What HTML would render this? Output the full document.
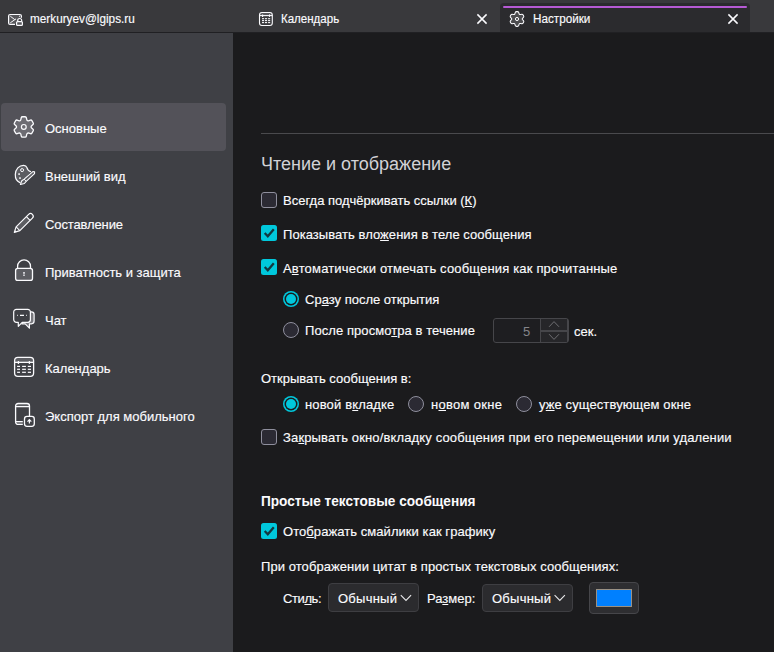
<!DOCTYPE html>
<html><head><meta charset="utf-8">
<style>
html,body{margin:0;padding:0;width:774px;height:652px;overflow:hidden;background:#1b1b1d;}
body{position:relative;font-family:"Liberation Sans",sans-serif;color:#fbfbfe;}
.abs{position:absolute;}
.t{position:absolute;white-space:nowrap;font-size:13px;line-height:13px;-webkit-text-stroke-width:0.15px;}
#strip{left:0;top:0;width:774px;height:32px;background:#39393c;}
#stripline{left:0;top:32px;width:774px;height:1px;background:#202023;}
#seltab{left:500px;top:3px;width:250px;height:29px;background:#2b2b2e;border-radius:4px 4px 0 0;}
#tabline{left:503px;top:6px;width:244px;height:2px;background:#b65ad4;border-radius:1px;}
#side{left:0;top:33px;width:233px;height:619px;background:#3f4045;}
#selitem{left:1px;top:103px;width:225px;height:48px;background:#535259;border-radius:4px;}
.sep{left:261px;top:133px;width:513px;height:1px;background:#4a4a4d;}
.cb{position:absolute;width:14px;height:14px;border:1px solid #8f8f9d;background:#2b2a33;border-radius:3px;}
.cbc{position:absolute;width:16px;height:16px;background:#00c4da;border-radius:3px;}
.rd{position:absolute;width:14px;height:14px;border:1px solid #8f8f9d;background:#2b2a33;border-radius:50%;}
.rdc{position:absolute;width:16px;height:16px;background:#00c4da;border-radius:50%;}
.rdc::after{content:"";position:absolute;left:2px;top:2px;width:8px;height:8px;border:2px solid #1b1b1d;border-radius:50%;background:#00c4da;}
.u{text-decoration:underline;text-underline-offset:1px;}
.dd{position:absolute;background:#2b2b2e;border:1px solid #3e3e42;box-sizing:border-box;border-radius:4px;}
</style></head><body>
<!-- tab strip -->
<div id="strip" class="abs"></div>
<div id="stripline" class="abs"></div>
<div id="seltab" class="abs"></div>
<div id="tabline" class="abs"></div>

<div class="t" style="left:30px;top:13px;font-size:12px;line-height:12px;transform:scaleX(0.98);transform-origin:0 0">merkuryev@lgips.ru</div>
<div class="t" style="left:281px;top:13px;font-size:12px;line-height:12px;transform:scaleX(0.96);transform-origin:0 0">Календарь</div>
<div class="t" style="left:533px;top:13px;font-size:12px;line-height:12px;transform:scaleX(0.975);transform-origin:0 0">Настройки</div>

<!-- sidebar -->
<div id="side" class="abs"></div>
<div id="selitem" class="abs"></div>
<div class="t" style="left:45px;top:122px">Основные</div>
<div class="t" style="left:45px;top:170px">Внешний вид</div>
<div class="t" style="left:45px;top:218px;letter-spacing:-0.12px">Составление</div>
<div class="t" style="left:45px;top:266px">Приватность и защита</div>
<div class="t" style="left:45px;top:314px">Чат</div>
<div class="t" style="left:45px;top:362px">Календарь</div>
<div class="t" style="left:45px;top:410px">Экспорт для мобильного</div>

<!-- content -->
<div class="abs sep"></div>
<div class="t" style="left:261px;top:155px;font-size:18px;line-height:18px;color:#d2d2d6;-webkit-text-stroke-width:0">Чтение и отображение</div>

<div class="cb" style="left:261px;top:192px"></div>
<div class="t" style="left:283px;top:194px">Всегда подчёркивать ссылки (<span class="u">К</span>)</div>

<svg class="abs" style="left:261px;top:225px" width="16" height="16" viewBox="0 0 16 16"><rect width="16" height="16" rx="2.5" fill="#00c8dc"/><path d="M3.7,8.0 L6.8,11.2 L12.8,4.2" fill="none" stroke="#123740" stroke-width="2.3"/></svg>
<div class="t" style="left:283px;top:228px;letter-spacing:0.05px">Показывать вло<span class="u">ж</span>ения в теле сообщения</div>

<svg class="abs" style="left:261px;top:259px" width="16" height="16" viewBox="0 0 16 16"><rect width="16" height="16" rx="2.5" fill="#00c8dc"/><path d="M3.7,8.0 L6.8,11.2 L12.8,4.2" fill="none" stroke="#123740" stroke-width="2.3"/></svg>
<div class="t" style="left:283px;top:262px;letter-spacing:0.17px">А<span class="u">в</span>томатически отмечать сообщения как прочитанные</div>

<svg class="abs" style="left:283px;top:291px" width="16" height="16" viewBox="0 0 16 16"><circle cx="8" cy="8" r="8" fill="#00c8dc"/><circle cx="8" cy="8" r="6.5" fill="#1b1b1d"/><circle cx="8" cy="8" r="5" fill="#00c8dc"/></svg>
<div class="t" style="left:305px;top:293px">Ср<span class="u">а</span>зу после открытия</div>

<div class="rd" style="left:283px;top:322px"></div>
<div class="t" style="left:305px;top:324px;letter-spacing:0.07px">После просмо<span class="u">т</span>ра в течение</div>

<div class="abs" style="left:493px;top:318px;width:74px;height:23px;border:1px solid #46464a;border-radius:3px;background:#1e1e21"></div><div class="abs" style="left:540px;top:319px;width:26px;height:23px;background:#262629;border-left:1px solid #46464a;border-right:1px solid #46464a"></div><div class="abs" style="left:541px;top:330px;width:26px;height:2px;background:#46464a"></div><svg class="abs" style="left:540px;top:318px" width="29" height="25" viewBox="540 318 29 25"><path d="M549.1,326.8 L554,321.6 L559,326.8 M549.1,334.2 L554,339.4 L559,334.2" fill="none" stroke="#6e6e72" stroke-width="1"/></svg>
<div class="t" style="left:523px;top:325px;color:#85858a;-webkit-text-stroke-width:0">5</div>
<div class="t" style="left:574px;top:325px">сек.</div>

<div class="t" style="left:261px;top:372px">Открывать сообщения в:</div>
<svg class="abs" style="left:283px;top:396px" width="16" height="16" viewBox="0 0 16 16"><circle cx="8" cy="8" r="8" fill="#00c8dc"/><circle cx="8" cy="8" r="6.5" fill="#1b1b1d"/><circle cx="8" cy="8" r="5" fill="#00c8dc"/></svg>
<div class="t" style="left:305px;top:398px;letter-spacing:0.15px">новой в<span class="u">к</span>ладке</div>
<div class="rd" style="left:408px;top:396px"></div>
<div class="t" style="left:431px;top:398px;letter-spacing:0.3px">н<span class="u">о</span>вом окне</div>
<div class="rd" style="left:516px;top:396px"></div>
<div class="t" style="left:539px;top:398px;letter-spacing:0.1px">у<span class="u">ж</span>е существующем окне</div>

<div class="cb" style="left:261px;top:429px"></div>
<div class="t" style="left:283px;top:431px;letter-spacing:0.14px">За<span class="u">к</span>рывать окно/вкладку сообщения при его перемещении или удалении</div>

<div class="t" style="left:261px;top:494px;font-size:14.5px;line-height:14px;font-weight:bold;-webkit-text-stroke-width:0;transform:scaleX(0.94);transform-origin:0 0">Простые текстовые сообщения</div>
<svg class="abs" style="left:261px;top:523px" width="16" height="16" viewBox="0 0 16 16"><rect width="16" height="16" rx="2.5" fill="#00c8dc"/><path d="M3.7,8.0 L6.8,11.2 L12.8,4.2" fill="none" stroke="#123740" stroke-width="2.3"/></svg>
<div class="t" style="left:283px;top:525px;letter-spacing:0.06px">Ото<span class="u">б</span>ражать смайлики как графику</div>

<div class="t" style="left:261px;top:560px;letter-spacing:0.07px">При отображении цитат в простых текстовых сообщениях:</div>
<div class="t" style="left:283px;top:592px;letter-spacing:-0.4px">Сти<span class="u">л</span>ь:</div>
<div class="dd" style="left:328px;top:583px;width:91px;height:29px"></div>
<div class="t" style="left:338px;top:592px;letter-spacing:0.25px">Обычный</div><svg class="abs" style="left:396px;top:590px" width="20" height="14" viewBox="396 590 20 14"><path d="M400.8,595.2 L406,600.5 L411.1,595.2" fill="none" stroke="#e8e8ea" stroke-width="1.1"/></svg>
<div class="t" style="left:427px;top:592px">Ра<span class="u">з</span>мер:</div>
<div class="dd" style="left:482px;top:584px;width:91px;height:28px"></div>
<div class="t" style="left:492px;top:592px;letter-spacing:0.25px">Обычный</div><svg class="abs" style="left:550px;top:590px" width="20" height="14" viewBox="550 590 20 14"><path d="M554.6,595.2 L559.8,600.5 L564.9,595.2" fill="none" stroke="#e8e8ea" stroke-width="1.1"/></svg>
<div class="dd" style="left:589px;top:582px;width:50px;height:32px;background:#2e2e31;border-color:#46464a"></div>
<div class="abs" style="left:596px;top:589px;width:34px;height:16px;background:#0080ff;border:1px solid #9a9184"></div>
<svg class="abs" style="left:0;top:0" width="774" height="652" viewBox="0 0 774 652">
<g transform="translate(5,110)"><path d="M15.45,10.37 Q15.75,10.16 15.95,9.18 L16.25,7.75 Q16.45,6.77 17.45,6.77 L20.15,6.77 Q21.15,6.77 21.35,7.75 L21.65,9.18 Q21.86,10.16 22.15,10.37 L22.15,10.37 Q22.44,10.59 22.78,10.74 L22.78,10.74 Q23.11,10.88 24.06,10.57 L25.45,10.11 Q26.40,9.80 26.90,10.67 L28.25,13.00 Q28.75,13.87 28.00,14.54 L26.91,15.51 Q26.16,16.18 26.13,16.54 L26.13,16.54 Q26.09,16.90 26.13,17.26 L26.13,17.26 Q26.16,17.62 26.91,18.29 L28.00,19.26 Q28.75,19.93 28.25,20.80 L26.90,23.13 Q26.40,24.00 25.45,23.69 L24.06,23.23 Q23.11,22.92 22.78,23.06 L22.78,23.06 Q22.44,23.21 22.15,23.43 L22.15,23.43 Q21.86,23.64 21.65,24.62 L21.35,26.05 Q21.15,27.03 20.15,27.03 L17.45,27.03 Q16.45,27.03 16.25,26.05 L15.95,24.62 Q15.75,23.64 15.45,23.43 L15.45,23.43 Q15.16,23.21 14.82,23.06 L14.82,23.06 Q14.49,22.92 13.54,23.23 L12.15,23.69 Q11.20,24.00 10.70,23.13 L9.35,20.80 Q8.85,19.93 9.60,19.26 L10.69,18.29 Q11.44,17.62 11.47,17.26 L11.47,17.26 Q11.51,16.90 11.47,16.54 L11.47,16.54 Q11.44,16.18 10.69,15.51 L9.60,14.54 Q8.85,13.87 9.35,13.00 L10.70,10.67 Q11.20,9.80 12.15,10.11 L13.54,10.57 Q14.49,10.88 14.82,10.74 L14.82,10.74 Q15.16,10.59 15.45,10.37Z" fill="rgba(251,251,254,0.16)" stroke="#fbfbfe" stroke-width="1.3" stroke-linejoin="round"/><circle cx="18.8" cy="16.9" r="2.4" fill="none" stroke="#fbfbfe" stroke-width="1.2"/></g>
<g transform="translate(5,158)"><path d="M14.9,24.6 C12.2,23.6 10.2,20.4 10.3,16.6 C10.4,11.2 14.2,7.3 18.6,7.3 C20.6,7.3 21.4,8.1 21.8,9.4 C22.3,11.2 22.9,12.8 25.6,13.6 L20.3,20.8 L15.6,24.9 Z" fill="rgba(251,251,254,0.16)" stroke="none"/><path d="M14.9,24.6 C12.2,23.6 10.2,20.4 10.3,16.6 C10.4,11.2 14.2,7.3 18.6,7.3 C20.6,7.3 21.4,8.1 21.8,9.4 C22.3,11.2 22.9,12.8 25.6,13.6" fill="none" stroke="#fbfbfe" stroke-width="1.2" stroke-linecap="round"/><circle cx="17.1" cy="12.1" r="1.5" fill="none" stroke="#fbfbfe" stroke-width="1"/><rect x="13.3" y="15.3" width="1.6" height="1.6" fill="#fbfbfe"/><rect x="14.2" y="19.3" width="1.6" height="1.6" fill="#fbfbfe"/>
<path d="M15.40,26.50 L16.82,22.68 L19.17,21.12 L27.87,13.67 L29.60,13.80 L29.54,15.53 L21.17,23.35 L19.35,25.52Z" fill="rgba(251,251,254,0.16)" stroke="#fbfbfe" stroke-width="1.1" stroke-linejoin="round"/><path d="M19.17,21.12 L21.17,23.35" stroke="#fbfbfe" stroke-width="1" fill="none"/></g>
<g transform="translate(5,206)"><path d="M11.10,20.85 L21.39,10.56 L25.14,14.31 L14.85,24.60Z" fill="rgba(251,251,254,0.16)"/><path d="M9.30,26.40 L11.10,20.85 L23.65,8.30 A2.65,2.65 0 0 1 27.40,12.05 L14.85,24.60Z" fill="none" stroke="#fbfbfe" stroke-width="1.2" stroke-linejoin="round"/><path d="M11.10,20.85 L14.85,24.60 M21.39,10.56 L25.14,14.31" stroke="#fbfbfe" stroke-width="1.1"/><path d="M9.30,26.40 L10.18,24.17 L11.53,25.52Z" fill="#fbfbfe"/></g>
<g transform="translate(5,254)"><path d="M12.6,14.2 V12.3 A6.45,6.45 0 0 1 25.5,12.3 V14.2" fill="none" stroke="#fbfbfe" stroke-width="1.3"/><rect x="10.6" y="14.4" width="16.9" height="12.0" rx="2.2" fill="rgba(251,251,254,0.16)" stroke="#fbfbfe" stroke-width="1.3"/><rect x="18.2" y="18.0" width="1.6" height="1.8" fill="#fbfbfe" opacity="0.9"/><rect x="18.2" y="20.5" width="1.6" height="1.4" fill="#fbfbfe" opacity="0.9"/></g>
<g transform="translate(5,302)"><path d="M25.4,9.8 H26.4 A2.7,2.7 0 0 1 29.1,12.5 V19.1 A2.7,2.7 0 0 1 26.4,21.8 H24.4 V26.2 L20.2,21.8 H16.8 L17.4,20.3 H22.7 A2.7,2.7 0 0 0 25.4,17.6 Z" fill="rgba(251,251,254,0.3)" stroke="#fbfbfe" stroke-width="1.2" stroke-linejoin="round"/><path d="M11.7,7.4 H22.7 A2.7,2.7 0 0 1 25.4,10.1 V17.6 A2.7,2.7 0 0 1 22.7,20.3 H17.2 L13.3,24.3 V20.3 H11.4 A2.7,2.7 0 0 1 8.7,17.6 V10.1 A2.7,2.7 0 0 1 11.4,7.4 Z" fill="#3f4045" stroke="#fbfbfe" stroke-width="1.2" stroke-linejoin="round"/><path d="M12.0,13.4 H12.7 M15.0,13.4 H19.0 M21.2,13.4 H21.9" stroke="#fbfbfe" stroke-width="1.2"/></g>
<g transform="translate(5,350)"><path d="M9.6,12.35 V10.7 A3.3,3.3 0 0 1 12.899999999999999,7.4 H25.3 A3.3,3.3 0 0 1 28.6,10.7 V12.35 Z" fill="rgba(251,251,254,0.16)"/><rect x="9.6" y="7.4" width="19.00" height="19.00" rx="3.3" fill="none" stroke="#fbfbfe" stroke-width="1.3"/><path d="M9.6,12.35 H28.6" stroke="#fbfbfe" stroke-width="1.3"/><path d="M13.4,11.049999999999999 V13.95" stroke="#fbfbfe" stroke-width="1.3"/><path d="M24.4,11.049999999999999 V13.95" stroke="#fbfbfe" stroke-width="1.3"/><rect x="12.1" y="15.80" width="2.90" height="1.2" fill="#fbfbfe"/><rect x="17.1" y="15.80" width="3.80" height="1.2" fill="#fbfbfe"/><rect x="22.8" y="15.80" width="3.20" height="1.2" fill="#fbfbfe"/><rect x="12.1" y="18.70" width="2.90" height="1.2" fill="#fbfbfe"/><rect x="17.1" y="18.70" width="3.80" height="1.2" fill="#fbfbfe"/><rect x="22.8" y="18.70" width="3.20" height="1.2" fill="#fbfbfe"/><rect x="12.1" y="21.70" width="2.90" height="1.2" fill="#fbfbfe"/><rect x="17.1" y="21.70" width="3.80" height="1.2" fill="#fbfbfe"/><rect x="22.8" y="21.70" width="3.20" height="1.2" fill="#fbfbfe"/></g>
<g transform="translate(5,398)"><path d="M24.5,18.0 V8.0 A2.5,2.5 0 0 0 22.0,5.5 H13.1 A2.5,2.5 0 0 0 10.6,8.0 V23.9 A2.5,2.5 0 0 0 13.1,26.4 H17.8" fill="none" stroke="#fbfbfe" stroke-width="1.3"/><path d="M10.6,8.6 H24.5 M10.6,23.6 H17.8" stroke="#fbfbfe" stroke-width="1.2"/><path d="M10.6,8.0 A2.5,2.5 0 0 1 13.1,5.5 H22.0 A2.5,2.5 0 0 1 24.5,8.0 V8.6 H10.6Z M10.6,23.6 H17.8 V26.4 H13.1 A2.5,2.5 0 0 1 10.6,23.9Z" fill="rgba(251,251,254,0.16)"/><rect x="19.5" y="18.4" width="9.8" height="9.9" rx="2.5" fill="none" stroke="#fbfbfe" stroke-width="1.3"/><path d="M24.4,25.6 V21.8 M22.5,23.6 L24.4,21.7 L26.3,23.6" fill="none" stroke="#fbfbfe" stroke-width="1.2"/></g>
<g><path d="M21.4,17.7 V16.0 A1.5,1.5 0 0 0 19.9,14.5 H10.1 A1.5,1.5 0 0 0 8.6,16.0 V22.9 A1.5,1.5 0 0 0 10.1,24.4 H15.0" fill="rgba(251,251,254,0.16)" stroke="#fbfbfe" stroke-width="1.2"/><path d="M10.3,16.2 L14.8,19.7 L10.3,22.8 M14.8,19.7 L16.0,18.9 M19.0,16.6 L20.2,15.8" fill="none" stroke="#fbfbfe" stroke-width="1.0"/><path d="M17.7,21.6 V20.5 A2.0,2.0 0 0 1 21.7,20.5 V21.6" fill="none" stroke="#fbfbfe" stroke-width="1.2"/><rect x="16.6" y="21.6" width="5.8" height="3.8" rx="1" fill="rgba(251,251,254,0.16)" stroke="#fbfbfe" stroke-width="1.2"/></g>
<path d="M259.5,15.6 V14.9 A2.4,2.4 0 0 1 261.9,12.5 H269.90000000000003 A2.4,2.4 0 0 1 272.3,14.9 V15.6 Z" fill="rgba(251,251,254,0.16)"/><rect x="259.5" y="12.5" width="12.80" height="13.00" rx="2.4" fill="none" stroke="#fbfbfe" stroke-width="1.1"/><path d="M259.5,15.6 H272.3" stroke="#fbfbfe" stroke-width="1.1"/><path d="M262.6,14.4 V16.9" stroke="#fbfbfe" stroke-width="1.1"/><path d="M269.5,14.4 V16.9" stroke="#fbfbfe" stroke-width="1.1"/><rect x="262.0" y="18.15" width="2.10" height="1.1" fill="#fbfbfe"/><rect x="265.0" y="18.15" width="2.10" height="1.1" fill="#fbfbfe"/><rect x="268.1" y="18.15" width="2.10" height="1.1" fill="#fbfbfe"/><rect x="262.0" y="20.05" width="2.10" height="1.1" fill="#fbfbfe"/><rect x="265.0" y="20.05" width="2.10" height="1.1" fill="#fbfbfe"/><rect x="268.1" y="20.05" width="2.10" height="1.1" fill="#fbfbfe"/><rect x="262.0" y="22.05" width="2.10" height="1.1" fill="#fbfbfe"/><rect x="265.0" y="22.05" width="2.10" height="1.1" fill="#fbfbfe"/><rect x="268.1" y="22.05" width="2.10" height="1.1" fill="#fbfbfe"/>
<path d="M514.57,14.34 Q514.75,14.20 515.05,13.25 L515.25,12.60 Q515.55,11.64 516.55,11.64 L517.45,11.64 Q518.45,11.64 518.75,12.60 L518.95,13.25 Q519.25,14.20 519.43,14.34 L519.43,14.34 Q519.61,14.48 519.82,14.57 L519.82,14.57 Q520.03,14.65 521.01,14.43 L521.67,14.28 Q522.65,14.07 523.15,14.93 L523.60,15.71 Q524.10,16.58 523.42,17.31 L522.96,17.81 Q522.28,18.55 522.25,18.77 L522.25,18.77 Q522.22,19.00 522.25,19.23 L522.25,19.23 Q522.28,19.45 522.96,20.19 L523.42,20.69 Q524.10,21.42 523.60,22.29 L523.15,23.07 Q522.65,23.93 521.67,23.72 L521.01,23.57 Q520.03,23.35 519.82,23.43 L519.82,23.43 Q519.61,23.52 519.43,23.66 L519.43,23.66 Q519.25,23.80 518.95,24.75 L518.75,25.40 Q518.45,26.36 517.45,26.36 L516.55,26.36 Q515.55,26.36 515.25,25.40 L515.05,24.75 Q514.75,23.80 514.57,23.66 L514.57,23.66 Q514.39,23.52 514.18,23.43 L514.18,23.43 Q513.97,23.35 512.99,23.57 L512.33,23.72 Q511.35,23.93 510.85,23.07 L510.40,22.29 Q509.90,21.42 510.58,20.69 L511.04,20.19 Q511.72,19.45 511.75,19.23 L511.75,19.23 Q511.78,19.00 511.75,18.77 L511.75,18.77 Q511.72,18.55 511.04,17.81 L510.58,17.31 Q509.90,16.58 510.40,15.71 L510.85,14.93 Q511.35,14.07 512.33,14.28 L512.99,14.43 Q513.97,14.65 514.18,14.57 L514.18,14.57 Q514.39,14.48 514.57,14.34Z" fill="rgba(251,251,254,0.16)" stroke="#fbfbfe" stroke-width="1.05" stroke-linejoin="round"/><circle cx="517" cy="19" r="1.6" fill="none" stroke="#fbfbfe" stroke-width="1"/>
<path d="M477.4,14.4 L486.6,23.6 M486.6,14.4 L477.4,23.6" stroke="#fbfbfe" stroke-width="1.5" fill="none"/>
<path d="M728.4,14.4 L737.6,23.6 M737.6,14.4 L728.4,23.6" stroke="#fbfbfe" stroke-width="1.5" fill="none"/>
</svg>

</body></html>
